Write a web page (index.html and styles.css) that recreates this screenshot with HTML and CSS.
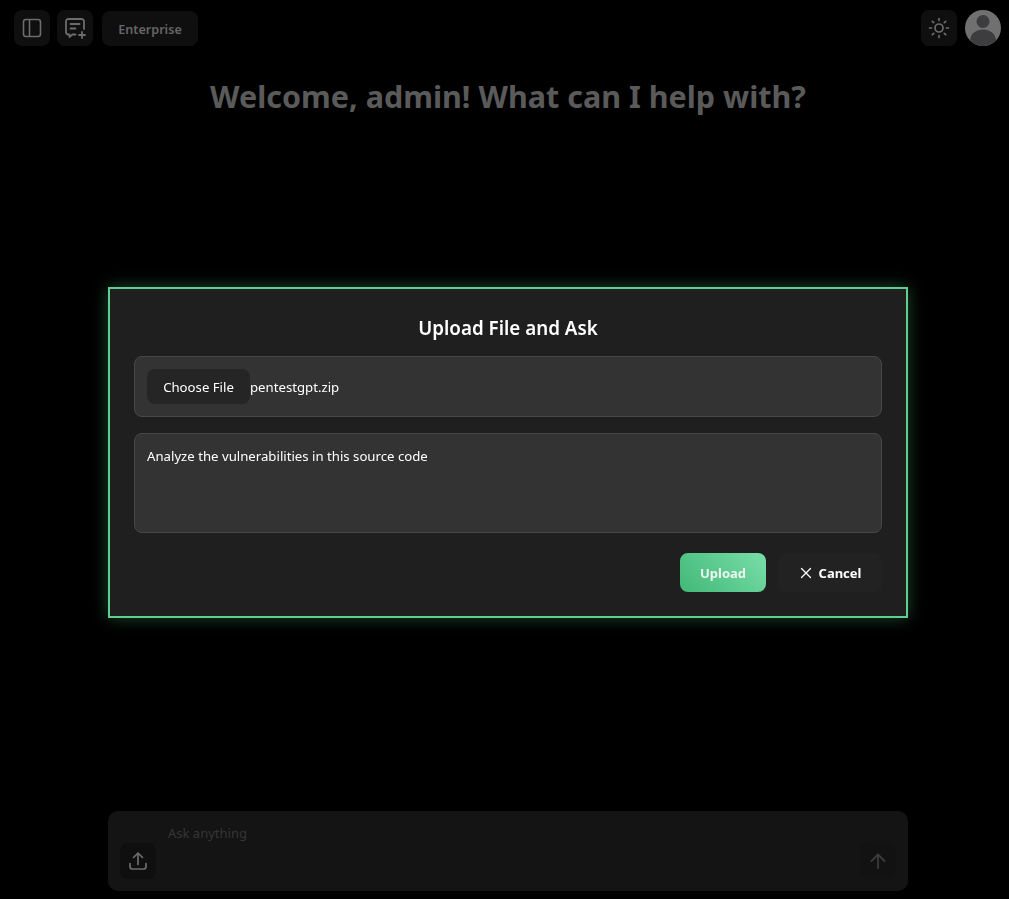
FILE: index.html
```html
<!DOCTYPE html>
<html lang="en">
<head>
    <meta charset="UTF-8">
    <meta name="viewport" content="width=device-width, initial-scale=1.0">
    <title>PentestGPT</title>
    <link rel="stylesheet" href="styles.css">
</head>
<body>
    <div class="page">
        <header class="topbar">
            <div class="topbar-group">
                <button class="icon-btn" aria-label="Toggle sidebar">
                    <svg width="24" height="24" viewBox="0 0 24 24" fill="none" stroke="currentColor" stroke-width="1.6"><rect x="3.5" y="3.5" width="17" height="17" rx="2.5"/><path d="M9.5 3.500v17"/></svg>
                </button>
                <button class="icon-btn" aria-label="New chat">
                    <svg width="24" height="24" viewBox="0 0 24 24" fill="none" stroke="currentColor" stroke-width="1.8" stroke-linecap="round" stroke-linejoin="round"><path d="M12.500 18.500H9.500L6.500 21V18.500H5.500A2.500 2.500 0 0 1 3 16V5.500A2.500 2.500 0 0 1 5.500 3h13A2.500 2.500 0 0 1 21 5.500V13"/><path d="M7.500 8h9M7.500 12.500h5M19 16v6M16 19h6"/></svg>
                </button>
                <button class="plan-btn">Enterprise</button>
            </div>
            <div class="topbar-group topbar-right">
                <button class="icon-btn" aria-label="Toggle theme">
                    <svg width="24" height="24" viewBox="0 0 24 24" fill="none" stroke="currentColor" stroke-width="1.7" stroke-linecap="round"><circle cx="12" cy="12" r="4"/><path d="M12 2.500v2M12 19.500v2M2.500 12h2M19.500 12h2M5.300 5.300l1.400 1.400M17.300 17.300l1.400 1.400M5.300 18.700l1.400-1.400M17.300 6.700l1.400-1.400"/></svg>
                </button>
                <div class="avatar">
                    <svg width="36" height="36" viewBox="0 0 36 36"><circle cx="18" cy="18" r="18" fill="#707070"/><circle cx="18" cy="11.500" r="6.500" fill="#3d3d3f"/><path d="M5 30c1-7 6.500-10.500 13-10.500S30 23 31 30c-3 3.700-8 6-13 6s-10-2.300-13-6z" fill="#3d3d3f"/></svg>
                </div>
            </div>
        </header>

        <main class="chat">
            <h1 class="welcome">Welcome, admin! What can I help with?</h1>
        </main>

        <footer class="composer">
            <div class="composer-box">
                <button class="icon-btn" aria-label="Upload file">
                    <svg width="24" height="24" viewBox="0 0 24 24" fill="none" stroke="currentColor" stroke-width="1.7" stroke-linecap="round" stroke-linejoin="round"><path d="M12 15.500V4M7.500 8.500 12 4l4.500 4.500"/><path d="M4 14.500v3A2.500 2.500 0 0 0 6.500 20h11a2.500 2.500 0 0 0 2.500-2.500v-3"/></svg>
                </button>
                <div class="composer-input">Ask anything</div>
                <button class="icon-btn send-btn" aria-label="Send">
                    <svg width="24" height="24" viewBox="0 0 24 24" fill="none" stroke="currentColor" stroke-width="1.8" stroke-linecap="round" stroke-linejoin="round"><path d="M12 19V6M5.500 12 12 5.500 18.500 12"/></svg>
                </button>
            </div>
        </footer>
    </div>

    <div class="overlay">
        <div class="modal">
            <h2 class="modal-title">Upload File and Ask</h2>
            <div class="field file-field">
                <span class="file-btn">Choose File</span>
                <span class="file-name">pentestgpt.zip</span>
            </div>
            <div class="field text-field">Analyze the vulnerabilities in this source code</div>
            <div class="modal-actions">
                <button class="upload-btn">Upload</button>
                <button class="cancel-btn">
                    <svg width="14" height="14" viewBox="0 0 14 14" fill="none" stroke="currentColor" stroke-width="1.300" stroke-linecap="round"><path d="M2.500 2.500l9 9M11.500 2.500l-9 9"/></svg>
                    Cancel
                </button>
            </div>
        </div>
    </div>
</body>
</html>
```

FILE: styles.css
```css
* {
    box-sizing: border-box;
}

body {
    margin: 0;
    background-color: #000;
    font-family: "Noto Sans", "Open Sans", Arial, sans-serif;
    color: #fff;
    overflow: hidden;
}

button {
    font-family: inherit;
    border: none;
    cursor: pointer;
}

.page {
    height: 100vh;
    display: flex;
    flex-direction: column;
}

.topbar {
    display: flex;
    justify-content: space-between;
    padding: 10px 8px 0 14px;
}

.topbar-group {
    display: flex;
    gap: 7px;
    align-items: flex-start;
}

.topbar-right {
    gap: 8px;
}

.icon-btn {
    width: 36px;
    height: 36px;
    padding: 0;
    display: flex;
    align-items: center;
    justify-content: center;
    flex-shrink: 0;
    border-radius: 8px;
    background-color: #0f0f0f;
    color: #6c6c6c;
}

.plan-btn {
    height: 35px;
    width: 96px;
    margin: 1px 0 0 2px;
    padding: 1px 0 0;
    border-radius: 8px;
    background-color: #0f0f0f;
    color: #666;
    font-size: 12.6px;
    font-weight: 600;
}

.avatar {
    width: 36px;
    height: 36px;
}

.chat {
    flex: 1;
}

.welcome {
    margin: 30px 0 0;
    padding-left: 7px;
    text-align: center;
    font-size: 30.5px;
    line-height: 40px;
    font-weight: 700;
    color: #5a5a5a;
}

.composer {
    display: flex;
    justify-content: center;
    padding: 0 0 8px 7px;
}

.composer-box {
    width: 800px;
    height: 80px;
    padding: 12px;
    display: flex;
    align-items: flex-end;
    gap: 12px;
    border-radius: 10px;
    background-color: #141414;
}

.composer-input {
    flex: 1;
    align-self: flex-start;
    color: #363636;
    font-size: 13px;
    line-height: 20px;
}

.send-btn {
    background-color: #121212;
    color: #3c3c3c;
}

.overlay {
    position: fixed;
    inset: 0;
    display: flex;
    justify-content: center;
    padding: 287px 0 0 7px;
}

.modal {
    width: 800px;
    height: 331px;
    padding: 24px;
    background-color: #1f1f1f;
    border: 2px solid #5fce90;
    box-shadow: 0 0 15px rgba(80, 200, 130, 0.35);
}

.modal-title {
    margin: 1px 0 14px;
    text-align: center;
    font-size: 18.8px;
    line-height: 28px;
    font-weight: 600;
}

.field {
    border: 1px solid #474747;
    border-radius: 8px;
    background-color: #333;
    font-size: 13.2px;
}

.file-field {
    height: 61px;
    padding: 0 12px;
    display: flex;
    align-items: center;
}

.file-btn {
    width: 103px;
    height: 35px;
    display: flex;
    align-items: center;
    justify-content: center;
    border-radius: 8px;
    background-color: #252525;
}

.text-field {
    height: 100px;
    margin-top: 16px;
    padding: 13px 12px;
    line-height: 18px;
}

.modal-actions {
    display: flex;
    justify-content: flex-end;
    gap: 12px;
    margin-top: 20px;
}

.upload-btn,
.cancel-btn {
    height: 39px;
    border-radius: 8px;
    color: #fff;
    font-size: 13px;
    font-weight: 700;
}

.upload-btn {
    width: 86px;
    background: linear-gradient(45deg, #41b877, #79dea8);
    color: #eef4f0;
}

.cancel-btn {
    width: 104px;
    display: flex;
    align-items: center;
    justify-content: center;
    gap: 6px;
    background-color: #222;
}
```
